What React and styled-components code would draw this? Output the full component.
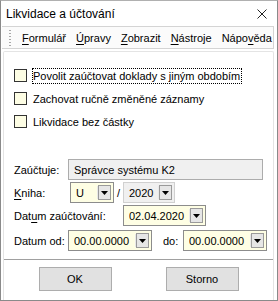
import React from 'react'
import styled, { createGlobalStyle } from 'styled-components'

const Global = createGlobalStyle`
  html, body {
    margin: 0;
    padding: 0;
    background: #ffffff;
  }
  * { box-sizing: border-box; }
`

const Window = styled.div`
  width: 278px;
  height: 301px;
  display: flex;
  flex-direction: column;
  background: #ffffff;
  border: 1px solid #8a8a8a;
  border-top-color: #b0b0b0;
  font-family: "Liberation Sans", Arial, sans-serif;
  font-size: 11px;
  color: #000;
  overflow: hidden;
`

const TitleBar = styled.div`
  height: 25px;
  display: flex;
  align-items: center;
  justify-content: space-between;
  padding: 0 10px 0 5px;
  font-size: 12px;
`

const MenuBar = styled.div`
  height: 23px;
  margin: 0 3px 0 1px;
  display: flex;
  align-items: center;
  border-top: 1px solid #d4d4d4;
  border-bottom: 1px solid #d4d4d4;
  border-right: 1px solid #d4d4d4;
  background: #fbfbfb;
`

const Grip = styled.div`
  width: 2px;
  height: 17px;
  margin: 0 11px 0 7px;
  background-image: radial-gradient(circle, #a8a8a8 0.8px, transparent 1px);
  background-size: 2px 3px;
`

const MenuItem = styled.span`
  margin-right: ${p => p.gap}px;
  white-space: nowrap;
`

const Key = styled.span`
  text-decoration: underline;
  text-underline-offset: 2px;
`

const Body = styled.div`
  flex: 1;
  margin: 2px 3px 0 2px;
  border: 1px solid #e4e4e4;
  border-bottom: none;
  border-radius: 2px 2px 0 0;
  padding: 12px 0 0 10px;
  display: flex;
  flex-direction: column;
`

const CheckRow = styled.label`
  height: 23px;
  display: flex;
  align-items: center;
  gap: 5px;
`

const Box = styled.span`
  width: 13px;
  height: 13px;
  border: 1px solid #333333;
  background: #fdfde4;
  flex: none;
`

const CheckText = styled.span`
  padding: 0 1px 0 0;
  border: 1px dotted ${p => (p.focus ? '#000' : 'transparent')};
  line-height: 14px;
  white-space: nowrap;
`

const Form = styled.div`
  margin-top: 26px;
  display: flex;
  flex-direction: column;
  gap: 2px;
`

const Row = styled.div`
  height: 21px;
  display: flex;
  align-items: center;
  margin-top: ${p => p.top || 0}px;
`

const Label = styled.span`
  width: ${p => p.w}px;
  flex: none;
  white-space: nowrap;
`

const TextBox = styled.div`
  width: 195px;
  height: 21px;
  border: 1px solid #acacac;
  background: #f0f0f0;
  display: flex;
  align-items: center;
  padding-left: 5px;
`

const Combo = styled.div`
  width: ${p => p.w}px;
  height: 21px;
  border: 1px solid ${p => (p.disabled ? '#d0d0d0' : '#8c8c8c')};
  background: ${p => (p.disabled ? '#f0f0f0' : '#fefee4')};
  display: flex;
  align-items: center;
  padding: 0 2px 0 5px;
`

const ComboText = styled.span`
  flex: 1;
  white-space: nowrap;
  overflow: hidden;
`

const DropBtn = styled.span`
  width: 13px;
  height: 15px;
  flex: none;
  border: 1px solid #9a9a9a;
  background: #e6e6e6;
  display: flex;
  align-items: center;
  justify-content: center;
  box-shadow: -2px 0 0 -1px #e8e8e8;
`

const Slash = styled.span`
  width: 9px;
  text-align: center;
`

const Do = styled.span`
  margin: 0 0 0 11px;
  width: 20px;
`

const Separator = styled.div`
  height: 1px;
  background: #a0a0a0;
  margin: 8px 0 0 -10px;
`

const Buttons = styled.div`
  display: flex;
  justify-content: center;
  gap: 54px;
  margin: 7px 0 0 -10px;
`

const Button = styled.button`
  width: 73px;
  height: 24px;
  border: 1px solid #adadad;
  background: #e1e1e1;
  font-family: inherit;
  font-size: 11px;
  color: #000;
  padding: 0;
`

const Arrow = () => (
  <svg width="7" height="4" viewBox="0 0 7 4">
    <path d="M0 0h7L3.5 4z" fill="#000" />
  </svg>
)

const Dropdown = ({ w, value, disabled }) => (
  <Combo w={w} disabled={disabled}>
    <ComboText>{value}</ComboText>
    <DropBtn>
      <Arrow />
    </DropBtn>
  </Combo>
)

const App = () => {
  return (
    <>
      <Global />
      <Window>
        <TitleBar>
          <span>Likvidace a účtování</span>
          <svg width="10" height="10" viewBox="0 0 10 10">
            <path d="M0.5 0.5L9.5 9.5M9.5 0.5L0.5 9.5" stroke="#222" strokeWidth="1" />
          </svg>
        </TitleBar>
        <MenuBar>
          <Grip />
          <MenuItem gap={10}><Key>F</Key>ormulář</MenuItem>
          <MenuItem gap={10}><Key>Ú</Key>pravy</MenuItem>
          <MenuItem gap={10}><Key>Z</Key>obrazit</MenuItem>
          <MenuItem gap={10}><Key>N</Key>ástroje</MenuItem>
          <MenuItem gap={0}>Nápo<Key>v</Key>ěda</MenuItem>
        </MenuBar>
        <Body>
          <CheckRow>
            <Box />
            <CheckText focus>Povolit zaúčtovat doklady s jiným obdobím</CheckText>
          </CheckRow>
          <CheckRow>
            <Box />
            <CheckText>Zachovat ručně změněné záznamy</CheckText>
          </CheckRow>
          <CheckRow>
            <Box />
            <CheckText>Likvidace bez částky</CheckText>
          </CheckRow>
          <Form>
            <Row>
              <Label w={54}>Zaúčtuje:</Label>
              <TextBox>Správce systému K2</TextBox>
            </Row>
            <Row>
              <Label w={56}><Key>K</Key>niha:</Label>
              <Dropdown w={44} value="U" />
              <Slash>/</Slash>
              <Dropdown w={52} value="2020" disabled />
            </Row>
            <Row>
              <Label w={109}>Dat<Key>u</Key>m zaúčtování:</Label>
              <Dropdown w={83} value="02.04.2020" />
            </Row>
            <Row top={2}>
              <Label w={54}>Datum od:</Label>
              <Dropdown w={84} value="00.00.0000" />
              <Do>do:</Do>
              <Dropdown w={84} value="00.00.0000" />
            </Row>
          </Form>
          <Separator />
          <Buttons>
            <Button>OK</Button>
            <Button>Storno</Button>
          </Buttons>
        </Body>
      </Window>
    </>
  )
}

export default App
